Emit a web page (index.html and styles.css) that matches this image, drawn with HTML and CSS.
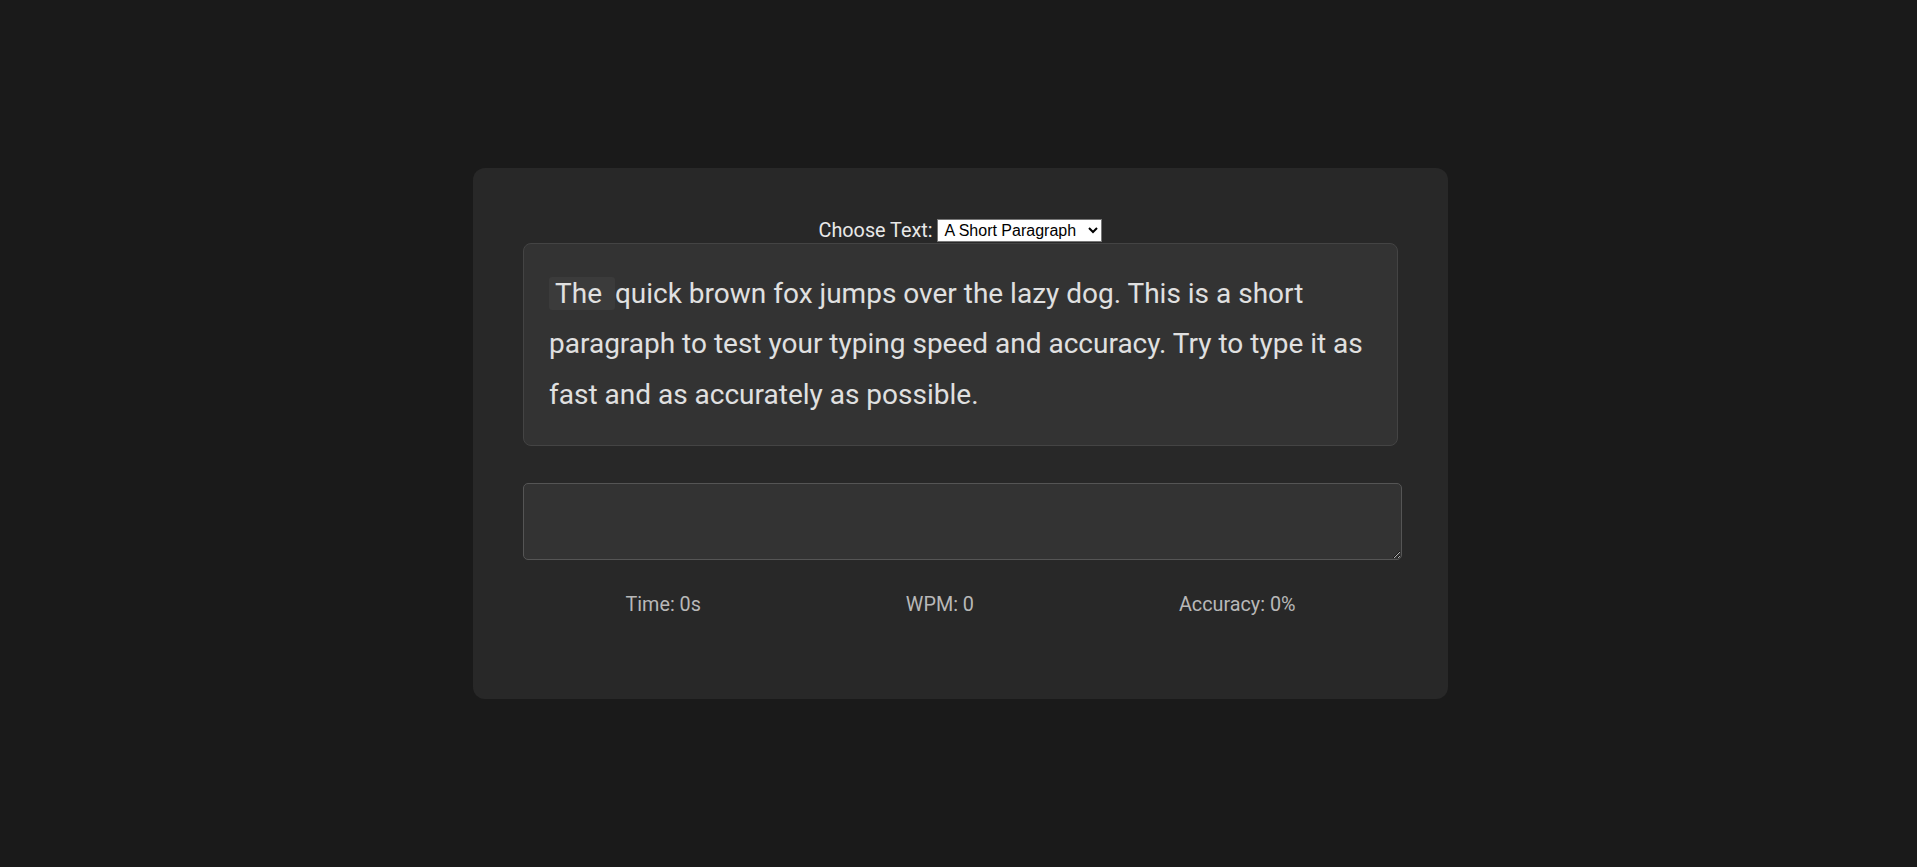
FILE: index.html
```html
<!DOCTYPE html>
<html lang="en">
<head>
<meta charset="utf-8">
<title>Typing Test</title>
<link rel="stylesheet" href="styles.css">
</head>
<body>
  <main class="card">
    <div class="chooser">
      <label class="chooser-label" for="text-select">Choose Text:</label>
      <select id="text-select" class="chooser-select">
        <option>A Short Paragraph</option>
        <option>A Long Paragraph</option>
        <option>Famous Quotes</option>
      </select>
    </div>
    <div class="passage"><span class="current">The </span>quick brown fox jumps over the lazy dog. This is a short paragraph to test your typing speed and accuracy. Try to type it as fast and as accurately as possible.</div>
    <textarea class="typing-input" autofocus></textarea>
    <div class="stats">
      <div class="stat">Time: 0s</div>
      <div class="stat">WPM: 0</div>
      <div class="stat">Accuracy: 0%</div>
    </div>
  </main>
</body>
</html>
```
FILE: styles.css
```css
html, body {
  margin: 0;
  padding: 0;
}

body {
  background: #1a1a1a;
  color: #e0e0e0;
  font-family: Roboto, "Liberation Sans", Arial, sans-serif;
  min-height: 100vh;
  display: flex;
  align-items: center;
  justify-content: center;
  padding-left: 4px;
  box-sizing: border-box;
}

.card {
  width: 875px;
  padding: 50px;
  background: #282828;
  border-radius: 12px;
}

.chooser {
  text-align: center;
  font-size: 19.8px;
  line-height: 25px;
  height: 25px;
  color: #e8e8e8;
}

.chooser-select {
  font-family: "Liberation Sans", Arial, sans-serif;
  font-size: 16px;
  color: #000;
  background: #fff;
  border: 1px solid #767676;
  border-radius: 0;
  height: 23px;
  padding: 0 0 0 2px;
  width: 165px;
  vertical-align: 1px;
}

.passage {
  background: #333333;
  border: 1px solid #444444;
  border-radius: 8px;
  padding: 25px;
  font-size: 28px;
  line-height: 50.4px;
  color: #e0e0e0;
}

.current {
  background: #3b3b3b;
  border-radius: 3px;
  padding: 0 6px;
}

.typing-input {
  display: block;
  box-sizing: border-box;
  width: calc(100% + 4px);
  height: 77px;
  margin-top: 37px;
  padding: 15px;
  background: #333333;
  color: #e0e0e0;
  border: 1px solid #555555;
  border-radius: 5px;
  font-family: Roboto, "Liberation Sans", Arial, sans-serif;
  font-size: 19.2px;
  caret-color: #ffffff;
  outline: none;
  resize: both;
}

.stats {
  display: flex;
  justify-content: space-around;
  margin: 33px 0 33px;
  font-size: 19.8px;
  line-height: 23px;
  color: #b8b8b8;
}
```
